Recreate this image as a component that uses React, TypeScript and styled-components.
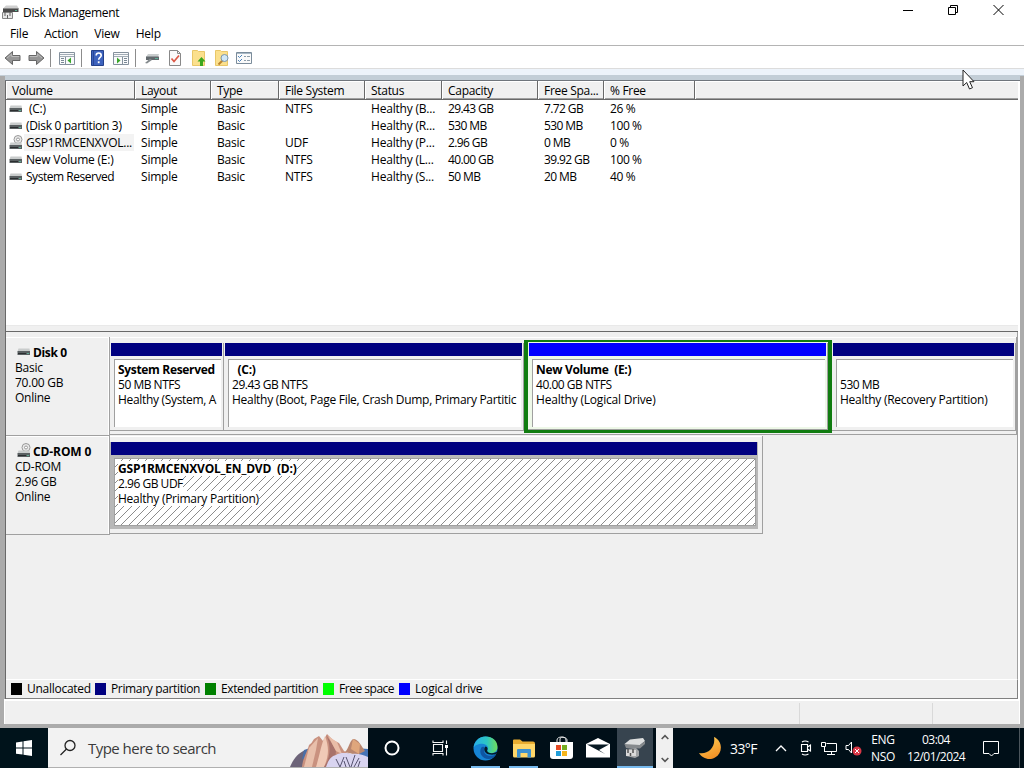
import styled, { createGlobalStyle, css } from "styled-components";

const GlobalStyle = createGlobalStyle`
  * {
    box-sizing: border-box;
  }

  body {
    margin: 0;
    width: 1024px;
    height: 768px;
    overflow: hidden;
    background: #f0f0f0;
    color: #000;
    font-family: "Open Sans", "Noto Sans", sans-serif;
    font-size: 12px;
    letter-spacing: -0.2px;
    white-space: pre;
  }

  svg {
    display: block;
    flex: none;
  }
`;

const Screen = styled.div`
  position: relative;
  display: flex;
  flex-direction: column;
  width: 1024px;
  height: 768px;
  overflow: hidden;
`;

const TitleBar = styled.header`
  display: flex;
  align-items: center;
  height: 24px;
  padding-left: 2px;
  background: #fff;
`;

const Title = styled.h1`
  flex: 1;
  margin: 0 0 0 4px;
  font-size: 12px;
  font-weight: 400;
  letter-spacing: -0.33px;
`;

const WindowButtons = styled.div`
  display: flex;
  align-items: center;
  gap: 34px;
  padding: 0 20px 4px 0;
`;

const MenuBar = styled.nav`
  display: flex;
  align-items: center;
  gap: 16px;
  height: 22px;
  padding: 0 10px 2px;
  background: #fff;
  border-bottom: 1px solid #b4b4b4;
  letter-spacing: -0.2px;
`;

const MenuItem = styled.span``;

const Toolbar = styled.div`
  display: flex;
  align-items: center;
  height: 23px;
  padding: 2px 0 0 4px;
  background: #fff;
  border-bottom: 1px solid #dcdcdc;
`;

const ToolIcon = styled.span<{ $ml?: number }>`
  display: flex;
  margin-left: ${({ $ml = 0 }) => $ml}px;
`;

const ToolSeparator = styled.span<{ $ml: number }>`
  width: 1px;
  height: 18px;
  margin-left: ${({ $ml }) => $ml}px;
  background: #8c8c8c;
`;

const Ribbon = styled.div`
  height: 12px;
  background:
    linear-gradient(#ababab, #ababab) left bottom / 5px 5px no-repeat,
    linear-gradient(#ababab, #ababab) right bottom / 4px 5px no-repeat,
    linear-gradient(#edf3fa 0 6px, #c3ced7 6px 11px, #6f757c 11px);
`;

const Frame = styled.main`
  display: flex;
  flex-direction: column;
  height: 618px;
  border: solid #ababab;
  border-width: 0 4px 0 5px;
`;

const Body = styled.div`
  display: flex;
  flex-direction: column;
  height: 618px;
  border-left: 1px solid #696969;
  border-right: 2px solid #fff;
`;

const VolumeList = styled.section`
  height: 244px;
  background: #fff;
`;

const columns = "129px 76px 68px 86px 77px 96px 66px 91px 1fr";

const HeaderRow = styled.div`
  display: grid;
  grid-template-columns: ${columns};
  height: 19px;
  background: #f0f0f0;
  border-bottom: 1px solid #696969;
  box-shadow: inset 0 -1px #a0a0a0, inset 0 1px #fff;
`;

const HeaderCell = styled.span<{ $last?: boolean }>`
  padding: 1px 0 0 ${({ $last }) => ($last ? 0 : 5)}px;
  border-left: 1px solid #fff;
  border-right: ${({ $last }) => ($last ? "none" : "1px solid #696969")};
  line-height: 18px;
  overflow: hidden;
  letter-spacing: -0.3px;
`;

const Row = styled.div`
  display: grid;
  grid-template-columns: ${columns};
  height: 17px;
  line-height: 17px;
`;

const Cell = styled.span<{ $ls?: number }>`
  padding-left: 6px;
  overflow: hidden;
  letter-spacing: ${({ $ls = -0.2 }) => $ls}px;
`;

const VolumeCell = styled.span`
  display: flex;
  align-items: center;
  padding-left: 3px;
`;

const VolumeName = styled.span<{ $focused?: boolean; $ls: number }>`
  margin-left: 1px;
  padding: 0 2px;
  letter-spacing: ${({ $ls }) => $ls}px;
  background: ${({ $focused }) => ($focused ? "#f3f3f3" : "none")};
`;

const Splitter = styled.div`
  height: 7px;
  background: linear-gradient(#e9e9e9 0 1px, #f0f0f0 1px 6px, #696969 6px);
`;

const DiskPane = styled.section`
  height: 347px;
  padding-top: 5px;
  background: #f0f0f0;
  border-right: 1px solid #a0a0a0;
`;

const DiskRow = styled.div`
  display: flex;
  height: 99px;
`;

const DiskInfo = styled.div`
  width: 104px;
  height: 99px;
  padding: 8px 0 0 9px;
  border: solid #a0a0a0;
  border-width: 0 1px 1px 0;
  box-shadow: inset 0 1px #fff, inset -1px 0 #fff;
  line-height: 15px;
  letter-spacing: -0.25px;
`;

const DiskName = styled.div`
  display: flex;
  align-items: flex-end;
  gap: 2px;
  height: 15px;
  padding-left: 2px;
  font-weight: 700;
`;

const DiskTitle = styled.span<{ $ls: number }>`
  letter-spacing: ${({ $ls }) => $ls}px;
`;

const Partitions = styled.div<{ $width: number }>`
  display: flex;
  width: ${({ $width }) => $width}px;
  height: 98px;
  padding-top: 6px;
  border: solid #a0a0a0;
  border-width: 0 1px 1px 0;
  box-shadow: inset 0 1px #fff;
`;

const Partition = styled.article<{ $width: number; $selected?: boolean }>`
  display: flex;
  flex: none;
  flex-direction: column;
  width: ${({ $width }) => $width}px;
  height: 88px;
  max-height: 100%;
  padding-left: 1px;
  border: solid #a0a0a0;
  border-width: 0 1px 1px 0;

  ${({ $selected }) =>
    $selected &&
    css`
      height: 87px;
      border: none;
      background: #b8b8b8;
    `}
`;

const Extended = styled.div`
  display: flex;
  flex: none;
  width: 308px;
  height: 93px;
  margin-top: -3px;
  padding-top: 1px;
  border: solid #107c10;
  border-width: 2px 4px 3px;
  background: #eef8e8;
`;

const Bar = styled.div<{ $color: string }>`
  flex: none;
  height: 13px;
  margin-right: 1px;
  background: ${({ $color }) => $color};
`;

const PartitionBody = styled.div<{ $hatched?: boolean }>`
  height: 68px;
  margin: 3px 2px 0 3px;
  padding: 2px 0 0 3px;
  border: solid #a0a0a0;
  border-width: 1px 0 0 1px;
  background: #fff;
  line-height: 15px;
  overflow: hidden;

  ${({ $hatched }) =>
    $hatched &&
    css`
      border-width: 1px;
      background: linear-gradient(135deg, #fff 45%, #8c8c8c 46% 54%, #fff 55%) 0 0 / 8px 8px;
    `}
`;

const Line = styled.div<{ $bold?: boolean; $ls?: number; $filled?: boolean }>`
  width: ${({ $filled }) => ($filled ? "fit-content" : "auto")};
  min-height: 15px;
  font-weight: ${({ $bold }) => ($bold ? 700 : 400)};
  letter-spacing: ${({ $ls = -0.2 }) => $ls}px;
  background: ${({ $filled }) => ($filled ? "#fff" : "none")};
`;

const Legend = styled.footer`
  display: flex;
  align-items: center;
  height: 20px;
  padding: 0 0 1px 5px;
  background: #f0f0f0;
  border-top: 1px solid #fff;
  border-bottom: 1px solid #808080;
  border-right: 1px solid #808080;
`;

const LegendItem = styled.span<{ $width: number; $ls: number }>`
  display: flex;
  align-items: center;
  gap: 5px;
  width: ${({ $width }) => $width}px;
  letter-spacing: ${({ $ls }) => $ls}px;
`;

const Swatch = styled.i<{ $color: string }>`
  flex: none;
  width: 11px;
  height: 12px;
  background: ${({ $color }) => $color};
`;

const StatusBar = styled.div`
  display: grid;
  grid-template-columns: 796px 133px 1fr;
  height: 25px;
  padding-top: 4px;
  border: solid #ababab;
  border-width: 0 4px;
  background: #f0f0f0;
  box-shadow: inset 0 2px #fff, inset 1px 0 #fff, inset -1px 0 #fff;
`;

const StatusCell = styled.span`
  border-right: 1px solid #d9d9d9;
`;

const BottomEdge = styled.div`
  height: 4px;
  background: #ababab;
`;

const Taskbar = styled.div`
  display: flex;
  height: 40px;
  background: #000f18;
  color: #fff;
`;

const StartButton = styled.button`
  display: grid;
  place-items: center;
  width: 48px;
  padding: 0;
  border: none;
  background: #00131b;
`;

const Search = styled.div`
  display: flex;
  align-items: center;
  width: 320px;
  padding-left: 11px;
  background: #f2f2f2;
  border-bottom: 1px solid #b0b0b0;
  color: #3b3b3b;
`;

const SearchText = styled.span`
  width: 141px;
  margin-left: 11px;
  margin-right: 63px;
  padding-top: 1px;
  font-size: 15px;
  letter-spacing: -0.53px;
`;

const TaskButton = styled.span<{ $width: number; $running?: boolean; $active?: boolean }>`
  display: grid;
  place-items: center;
  width: ${({ $width }) => $width}px;
  background: ${({ $active }) => ($active ? "#37444f" : "none")};
  box-shadow: ${({ $running }) => ($running ? "inset 0 -2px #76b9ed" : "none")};
`;

const PinnedApps = styled.div`
  display: flex;
  gap: 9px;
  margin: 0 5px 0 7px;
`;

const TaskScroll = styled.span`
  display: flex;
  flex-direction: column;
  align-items: center;
  justify-content: space-between;
  width: 17px;
  margin-left: 3px;
  padding: 6px 0 5px;
  background: #f0f0f0;
`;

const Tray = styled.div`
  display: flex;
  align-items: center;
  flex: 1;
  padding-left: 26px;
`;

const Temperature = styled.span`
  width: 45px;
  margin-left: 8px;
  font-size: 14px;
  letter-spacing: -0.6px;
`;

const TrayIcon = styled.span<{ $width: number }>`
  width: ${({ $width }) => $width}px;
`;

const TrayText = styled.span<{ $width: number; $ls: number }>`
  width: ${({ $width }) => $width}px;
  padding-bottom: 1px;
  line-height: 17px;
  text-align: center;
  letter-spacing: ${({ $ls }) => $ls}px;
`;

const Notifications = styled.span`
  margin-left: 9px;
`;

const ShowDesktop = styled.span`
  align-self: stretch;
  width: 5px;
  margin-left: auto;
  border-left: 1px solid #4b555c;
`;

const Cursor = styled.svg`
  position: absolute;
  left: 962px;
  top: 69px;
`;

const DriveIcon = ({ disc }: { disc?: boolean }) => (
  <svg width="14" height="16" viewBox="0 0 14 16">
    {disc && (
      <>
        <circle cx="9" cy="4.5" r="4" fill="#e9e9e9" stroke="#999" />
        <circle cx="9" cy="4.5" r="1.5" fill="#fff" stroke="#999" />
      </>
    )}
    <g transform={disc ? "translate(0 3)" : undefined}>
      <path d="M1.5 4.5h11l.5 3H.5z" fill="#c9cccc" />
      <path d="M.5 7h12.500v4H.5z" fill="#5a6062" />
      <path d="M1 9.500h8" stroke="#2b2e30" />
      <path d="M10 9.500h2" stroke="#5eae94" />
    </g>
  </svg>
);

const AppIcon = () => (
  <svg width="17" height="16" viewBox="0 0 17 16">
    <path d="M4 1.500h11l1.500 2.500H1.500z" fill="#cfcfcf" />
    <path d="M1 4h15.500v4H1z" fill="#4a4a4a" />
    <path d="M1 4.500h15" stroke="#8a8a8a" />
    <path d="M13 6.500h2" stroke="#5bb394" />
    <path d="M.5 8.500h10v6H.5z" fill="#e6e6e6" stroke="#858585" />
    <path d="M3 8v4M8 8v4M5.500 11v3.500" stroke="#606060" />
  </svg>
);

const Arrow = ({ flip }: { flip?: boolean }) => (
  <svg width="18" height="16" viewBox="0 0 18 16">
    <g transform={flip ? "translate(18 0) scale(-1 1)" : undefined}>
      <path d="M1 8 8.500 1.500v4H16v5H8.500v4z" fill="#969696" stroke="#666" />
      <path d="m3 8 4.700-4v2.500h7.500" fill="none" stroke="#bcbcbc" />
    </g>
  </svg>
);

const PaneIcon = ({ flip }: { flip?: boolean }) => (
  <svg width="16" height="16" viewBox="0 0 16 16">
    <path d="M.5 2.500h15v12H.5z" fill="#f9fafb" stroke="#85919d" />
    <path d="M1 4.500h14M1 6.500h14" stroke="#a3adb6" />
    <path d={flip ? "M9.500 7v7" : "M6.500 7v7"} stroke="#85919d" />
    <path d={flip ? "M11 8.500h3M11 10.500h3M11 12.500h3" : "M2 8.500h3M2 10.500h3M2 12.500h3"} stroke="#7a8894" />
    <path d={flip ? "M4 7.500v6l3.500-3z" : "M12 7.500v6l-3.500-3z"} fill="#39a629" />
  </svg>
);

const HelpIcon = () => (
  <svg width="14" height="17" viewBox="0 0 14 17">
    <path d="M.5.5h12v15H.5z" fill="#3d62bd" stroke="#24418b" />
    <path d="M2.500 1v14" stroke="#2a4796" />
    <path d="M5.200 5.500c0-3.300 5-3.300 5 0 0 2-2.500 2-2.500 4.300" fill="none" stroke="#fff" strokeWidth="1.6" />
    <path d="M6.800 11.300h1.800v1.900H6.800z" fill="#fff" />
  </svg>
);

const ConnectIcon = () => (
  <svg width="16" height="16" viewBox="0 0 16 16">
    <path d="M4 4h11l-1 3H2z" fill="#c8cccd" />
    <path d="M2 6.500h13v3.500H2z" fill="#62696d" />
    <path d="M11 8.500h3" stroke="#5dae95" />
    <path d="m1 13 5-4.500L8 10l-5 3.500z" fill="#858b8e" />
  </svg>
);

const CheckPage = () => (
  <svg width="14" height="17" viewBox="0 0 14 17">
    <path d="M1.500.5h8l3 3v12h-11z" fill="#fafafa" stroke="#888" />
    <path d="M9.500.5v3h3" fill="none" stroke="#888" />
    <path d="m3.500 8.500 2.500 3 5-6" fill="none" stroke="#dc5846" strokeWidth="1.7" />
  </svg>
);

const FolderUp = () => (
  <svg width="15" height="17" viewBox="0 0 15 17">
    <path d="M.5.5h5l1 1h6v14H.5z" fill="#fbe08d" stroke="#e9c768" />
    <path d="m9.500 7 4 4.500h-2.500V16H8v-4.500H5.500z" fill="#3ba71e" />
  </svg>
);

const FolderSearch = () => (
  <svg width="15" height="17" viewBox="0 0 15 17">
    <path d="M.5.5h5l1 1h6v14H.5z" fill="#fbe08d" stroke="#e9c768" />
    <path d="m3.500 14.500 4-4" stroke="#bb842f" strokeWidth="2" />
    <circle cx="9.500" cy="8" r="3.500" fill="#cfe7f7" stroke="#7b96aa" />
  </svg>
);

const ListIcon = () => (
  <svg width="16" height="14" viewBox="0 0 16 14">
    <path d="M.5 1.500h15v11H.5z" fill="#fafafa" stroke="#7b8c9b" />
    <path d="M1 2.500h14" stroke="#a9b9c6" />
    <path d="m2 5 1.500 1.500L6 4M2 9l1.500 1.500L6 8" fill="none" stroke="#4b82ba" />
    <path d="M8 5.500h2m1 0h3M8 9.500h2m1 0h3" stroke="#8f9eaa" />
  </svg>
);

const Chevron = ({ down, color = "#555", size = 8 }: { down?: boolean; color?: string; size?: number }) => (
  <svg width={size} height={size / 2 + 2} viewBox="0 0 12 8">
    <path
      d={down ? "m1 1 5 5 5-5" : "m1 7 5-5 5 5"}
      fill="none"
      stroke={color}
      strokeWidth={size > 10 ? 1.3 : 2.4}
    />
  </svg>
);

const SearchIcon = () => (
  <svg width="18" height="18" viewBox="0 0 18 18" fill="none" stroke="#222" strokeWidth="1.3">
    <circle cx="11" cy="6.500" r="5" />
    <path d="m7.500 10-6 6" />
  </svg>
);

const Mountains = () => (
  <svg width="78" height="39" viewBox="0 0 78 39">
    <path d="M0 39c3-7 7-14 16-17h6l4 17z" fill="#6d6479" />
    <path d="m14 22 9-3 2 10-13 2z" fill="#4a6fa8" />
    <path d="m66 20 12 1v10H62z" fill="#4673b5" />
    <path d="M12 39c1-10 5-14 7-22q3-2 5-6l5-3 4 5 4-7 6 6 6 3 5 8 8 4v12z" fill="#c9917f" />
    <path d="m28 10-9 10-5 19h8l4-17z" fill="#e8bfab" />
    <path d="M35 8c-4 9-5 18-9 31h8c4-9 6-18 1-31z" fill="#f0cab7" />
    <path d="M36 7c5 9 5 22-2 32h10l2-16-5-9z" fill="#a8726b" />
    <path d="m38 8 8 15 6 3-5-12z" fill="#e9bda8" />
    <path d="M55 24c4-4 4-10 8-13 6 0 8 7 12 12l-8 4z" fill="#b9866f" />
    <path d="m63 11-2 10 8 5 1-10z" fill="#dfa67c" />
    <path d="M36 39c2-6 5-11 10-12 4-3 12-2 16-1 6-1 11 1 16 3v10z" fill="#d9d4f0" />
    <path d="m50 39-4-8m4 8 4-10m2 10-2-6m6 6-4-10m5 10 4-12m-1 12 5-9m-1 9 2-6" fill="none" stroke="#55526e" />
  </svg>
);

const TaskViewIcon = () => (
  <svg width="17" height="16" viewBox="0 0 17 16" fill="none" stroke="#f4f4f4" strokeWidth="1.1">
    <path d="M1.500 4.500h9v7h-9zM1 .5v2h10v-2M1 15.500v-2h10v2M14.500.5v3.500m0 4v7.500" />
    <path d="M13 5h3v3h-3z" fill="#fff" stroke="none" />
  </svg>
);

const EdgeIcon = () => (
  <svg width="25" height="25" viewBox="0 0 24 24">
    <defs>
      <linearGradient id="edgeTop">
        <stop stopColor="#28aee8" />
        <stop offset=".55" stopColor="#2cc6c4" />
        <stop offset="1" stopColor="#70dd5a" />
      </linearGradient>
    </defs>
    <circle cx="12" cy="12" r="11.500" fill="#1684d4" />
    <path d="M.5 12C1 5 6 .5 12 .5c7 0 11.500 4.500 11.500 10 0 4-3 6-6.500 6-3 0-4-1.200-3.500-2.200 2.500-3-.5-6.800-4.500-6.800C5 7.500 1 9 .5 12z" fill="url(#edgeTop)" />
    <path d="M8 11c-3 5 1 11 7 11 3 0 5-1 7-4-8 3-13-1-11-6.500C10.500 10 9 10 8 11z" fill="#0e55a2" />
    <path d="M13.500 14c1-2 .5-3.500-1.500-4-2 1.500-1.500 6.500 3 7.500 3 .7 6 .4 7.500-.5l1.500-3c-1.500 2-3.500 2.500-6 2.500s-4-.7-4.500-2.500z" fill="#041a29" />
  </svg>
);

const ExplorerIcon = () => (
  <svg width="22" height="19" viewBox="0 0 22 19">
    <path d="M0 1.500Q0 .5 1 .5h6l2.500 2H20q2 0 2 2V17H0z" fill="#e9ad31" />
    <path d="M0 5h22v12q0 1.500-1.500 1.500h-19Q0 18.500 0 17z" fill="#ffd769" />
    <path d="M4 18.500V11q0-1 1-1h12q1 0 1 1v7.500h-3.500V14h-7v4.500z" fill="#3d91cf" />
  </svg>
);

const StoreIcon = () => (
  <svg width="23" height="24" viewBox="0 0 23 24">
    <path d="M7 7V4c0-4 9-4 9 0v3M10 6V3c0-3 7-2 7 1v2" fill="none" stroke="#e8e8e8" />
    <path d="M0 6h23v14q0 3-3 3H3q-3 0-3-3z" fill="#fff" />
    <path d="M6 9h5v5H6z" fill="#e64b25" />
    <path d="M12 9h5v5h-5z" fill="#76ad21" />
    <path d="M6 15h5v5H6z" fill="#229ed9" />
    <path d="M12 15h5v5h-5z" fill="#f5b51b" />
  </svg>
);

const MailIcon = () => (
  <svg width="24" height="20" viewBox="0 0 24 20">
    <path d="M0 6 12 0l12 6v13.500H0z" fill="#fff" />
    <path d="M1 6.500h22l-10 5.500 6 4z" fill="#071923" />
  </svg>
);

const ManagementIcon = () => (
  <svg width="24" height="22" viewBox="0 0 24 22">
    <path d="M7 2.500 20 1l2 3-5 4H3L1.500 7z" fill="#dcdede" />
    <path d="m1.500 7 15.500 1 5-4v3l-5 4.500L3 11z" fill="#85898c" />
    <path d="m3 12 10-1 3 3v5l-4 2-9-2z" fill="#a2a5a7" />
    <path d="M3 13h10v6H3z" fill="#dadada" />
    <path d="M5 12v4m5-4v4M7.500 16v3" stroke="#555" strokeWidth="1.5" />
  </svg>
);

const MoonIcon = () => (
  <svg width="23" height="23" viewBox="0 0 23 23">
    <defs>
      <linearGradient id="moon" x2=".5" y2="1">
        <stop stopColor="#ffd45a" />
        <stop offset="1" stopColor="#f39327" />
      </linearGradient>
    </defs>
    <path d="M15 0c9 4 9 16 1 20.500C10 24 3 21 0 16c8 2 17-5 15-16z" fill="url(#moon)" />
  </svg>
);

const MeetIcon = () => (
  <svg width="12" height="16" viewBox="0 0 12 16" fill="none" stroke="#fff" strokeWidth="1.1">
    <path d="M1.500 4.500h6v7h-6zM7.500 7 10.500 5v6l-3-2M2 2q3-2 6.500 0M2 14q3 2 6.500 0" />
  </svg>
);

const NetworkIcon = () => (
  <svg width="17" height="15" viewBox="0 0 17 15" fill="none" stroke="#fff">
    <path d="M5.500 2.500h10v8h-12v-4M10.500 11v3M6 13.500h8M.5 1.500h4v4h-4zM3.500 6v5" />
  </svg>
);

const VolumeIcon = () => (
  <svg width="17" height="16" viewBox="0 0 17 16">
    <path d="M1 5.500h2.500L6.500 2v11L3.500 9.500H1z" fill="none" stroke="#fff" />
    <circle cx="12" cy="11" r="4.500" fill="#d93746" />
    <path d="m10 9 4 4m0-4-4 4" stroke="#fff" />
  </svg>
);

type Volume = {
  name: string;
  ls: number;
  fs: string;
  status: string;
  capacity: string;
  free: string;
  percent: string;
  disc?: boolean;
};

const volumes: Volume[] = [
  { name: " (C:)", ls: -0.2, fs: "NTFS", status: "Healthy (B...", capacity: "29.43 GB", free: "7.72 GB", percent: "26 %" },
  { name: "(Disk 0 partition 3)", ls: -0.32, fs: "", status: "Healthy (R...", capacity: "530 MB", free: "530 MB", percent: "100 %" },
  { name: "GSP1RMCENXVOL...", ls: -0.25, fs: "UDF", status: "Healthy (P...", capacity: "2.96 GB", free: "0 MB", percent: "0 %", disc: true },
  { name: "New Volume (E:)", ls: -0.22, fs: "NTFS", status: "Healthy (L...", capacity: "40.00 GB", free: "39.92 GB", percent: "100 %" },
  { name: "System Reserved", ls: -0.46, fs: "NTFS", status: "Healthy (S...", capacity: "50 MB", free: "20 MB", percent: "40 %" },
];

const headers = ["Volume", "Layout", "Type", "File System", "Status", "Capacity", "Free Spa...", "% Free"];

const legend = [
  { label: "Unallocated", color: "#000", width: 84, ls: -0.27 },
  { label: "Primary partition", color: "#000080", width: 110, ls: -0.35 },
  { label: "Extended partition", color: "#008000", width: 118, ls: -0.38 },
  { label: "Free space", color: "#00ff00", width: 76, ls: -0.48 },
  { label: "Logical drive", color: "#0000ff", width: 110, ls: -0.17 },
];

type PartitionPanelProps = {
  width: number;
  color?: string;
  name: string;
  nameLs?: number;
  size: string;
  status: string;
  statusLs?: number;
  selected?: boolean;
};

const PartitionPanel = ({
  width,
  color = "#000080",
  name,
  nameLs = -0.33,
  size,
  status,
  statusLs = -0.27,
  selected,
}: PartitionPanelProps) => (
  <Partition $width={width} $selected={selected}>
    <Bar $color={color} />
    <PartitionBody $hatched={selected}>
      <Line $bold $ls={nameLs} $filled={selected}>{name}</Line>
      <Line $ls={-0.48} $filled={selected}>{size}</Line>
      <Line $ls={statusLs} $filled={selected}>{status}</Line>
    </PartitionBody>
  </Partition>
);

export default function App() {
  return (
    <Screen>
      <GlobalStyle />
      <TitleBar>
        <AppIcon />
        <Title>Disk Management</Title>
        <WindowButtons>
          <svg width="11" height="12"><path d="M0 6.500h10" stroke="#000" /></svg>
          <svg width="11" height="12" fill="none" stroke="#000"><path d="M.5 3.500h7v7h-7zM2.500 3V1.500h7v7H8" /></svg>
          <svg width="11" height="12"><path d="m.5 1 10 10m0-10-10 10" stroke="#000" /></svg>
        </WindowButtons>
      </TitleBar>
      <MenuBar>
        <MenuItem>File</MenuItem>
        <MenuItem>Action</MenuItem>
        <MenuItem>View</MenuItem>
        <MenuItem>Help</MenuItem>
      </MenuBar>
      <Toolbar>
        <ToolIcon><Arrow /></ToolIcon>
        <ToolIcon $ml={5}><Arrow flip /></ToolIcon>
        <ToolSeparator $ml={5} />
        <ToolIcon $ml={8}><PaneIcon /></ToolIcon>
        <ToolSeparator $ml={6} />
        <ToolIcon $ml={9}><HelpIcon /></ToolIcon>
        <ToolIcon $ml={8}><PaneIcon flip /></ToolIcon>
        <ToolSeparator $ml={6} />
        <ToolIcon $ml={8}><ConnectIcon /></ToolIcon>
        <ToolIcon $ml={8}><CheckPage /></ToolIcon>
        <ToolIcon $ml={10}><FolderUp /></ToolIcon>
        <ToolIcon $ml={8}><FolderSearch /></ToolIcon>
        <ToolIcon $ml={6}><ListIcon /></ToolIcon>
      </Toolbar>
      <Ribbon />
      <Frame>
        <Body>
          <VolumeList>
            <HeaderRow>
              {headers.map((h) => (
                <HeaderCell key={h}>{h}</HeaderCell>
              ))}
              <HeaderCell $last />
            </HeaderRow>
            {volumes.map((v) => (
              <Row key={v.name}>
                <VolumeCell>
                  <DriveIcon disc={v.disc} />
                  <VolumeName $ls={v.ls} $focused={v.disc}>{v.name}</VolumeName>
                </VolumeCell>
                <Cell>Simple</Cell>
                <Cell>Basic</Cell>
                <Cell>{v.fs}</Cell>
                <Cell>{v.status}</Cell>
                <Cell $ls={-0.6}>{v.capacity}</Cell>
                <Cell $ls={-0.6}>{v.free}</Cell>
                <Cell $ls={-0.4}>{v.percent}</Cell>
              </Row>
            ))}
          </VolumeList>
          <Splitter />
          <DiskPane>
            <DiskRow>
              <DiskInfo>
                <DiskName><DriveIcon /><DiskTitle $ls={-0.35}>Disk 0</DiskTitle></DiskName>
                <div>Basic</div>
                <div>70.00 GB</div>
                <div>Online</div>
              </DiskInfo>
              <Partitions $width={907}>
                <PartitionPanel width={114} name="System Reserved" size="50 MB NTFS" status="Healthy (System, A" statusLs={-0.32} />
                <PartitionPanel width={300} name="  (C:)" size="29.43 GB NTFS" status="Healthy (Boot, Page File, Crash Dump, Primary Partitic" statusLs={-0.29} />
                <Extended>
                  <PartitionPanel width={300} color="#0000ff" name="New Volume  (E:)" size="40.00 GB NTFS" status="Healthy (Logical Drive)" statusLs={-0.2} />
                </Extended>
                <PartitionPanel width={184} name="" size="530 MB" status="Healthy (Recovery Partition)" />
              </Partitions>
            </DiskRow>
            <DiskRow>
              <DiskInfo>
                <DiskName><DriveIcon disc /><DiskTitle $ls={-0.1}>CD-ROM 0</DiskTitle></DiskName>
                <div>CD-ROM</div>
                <div>2.96 GB</div>
                <div>Online</div>
              </DiskInfo>
              <Partitions $width={653}>
                <PartitionPanel selected width={648} name="GSP1RMCENXVOL_EN_DVD  (D:)" nameLs={-0.2} size="2.96 GB UDF" status="Healthy (Primary Partition)" />
              </Partitions>
            </DiskRow>
          </DiskPane>
          <Legend>
            {legend.map((l) => (
              <LegendItem key={l.label} $width={l.width} $ls={l.ls}>
                <Swatch $color={l.color} />
                {l.label}
              </LegendItem>
            ))}
          </Legend>
        </Body>
      </Frame>
      <StatusBar>
        <StatusCell />
        <StatusCell />
      </StatusBar>
      <BottomEdge />
      <Taskbar>
        <StartButton>
          <svg width="16" height="16" fill="#fff"><path d="M0 2.500 6.500 1.500v6H0zM7.500 1.300 16 0v7.500H7.500zM0 8.500h6.500v6L0 13.700zM7.500 8.500H16V16l-8.500-1.300z" /></svg>
        </StartButton>
        <Search>
          <SearchIcon />
          <SearchText>Type here to search</SearchText>
          <Mountains />
        </Search>
        <TaskButton $width={48}>
          <svg width="16" height="16"><circle cx="8" cy="8" r="6.500" fill="none" stroke="#fff" strokeWidth="2" /></svg>
        </TaskButton>
        <TaskButton $width={48}><TaskViewIcon /></TaskButton>
        <PinnedApps>
          <TaskButton $width={29} $running><EdgeIcon /></TaskButton>
          <TaskButton $width={29} $running><ExplorerIcon /></TaskButton>
          <TaskButton $width={28}><StoreIcon /></TaskButton>
          <TaskButton $width={28}><MailIcon /></TaskButton>
        </PinnedApps>
        <TaskButton $width={36} $running $active><ManagementIcon /></TaskButton>
        <TaskScroll>
          <Chevron />
          <Chevron down />
        </TaskScroll>
        <Tray>
          <MoonIcon />
          <Temperature>33°F</Temperature>
          <TrayIcon $width={25}><Chevron color="#fff" size={12} /></TrayIcon>
          <TrayIcon $width={21}><MeetIcon /></TrayIcon>
          <TrayIcon $width={24}><NetworkIcon /></TrayIcon>
          <TrayIcon $width={22}><VolumeIcon /></TrayIcon>
          <TrayText $width={32} $ls={-0.35}>{"ENG\nNSO"}</TrayText>
          <TrayText $width={74} $ls={-0.55}>{"03:04\n12/01/2024"}</TrayText>
          <Notifications>
            <svg width="18" height="18" fill="none" stroke="#fff"><path d="M1.500 2.500h15v12H12l-2.500 2.500L7 14.500H1.500z" /></svg>
          </Notifications>
          <ShowDesktop />
        </Tray>
      </Taskbar>
      <Cursor width="13" height="21" viewBox="0 0 13 21">
        <path d="M1 1v16l3.700-3.500L7.500 20l3-1.300-2.800-6H12z" fill="#fff" stroke="#222" />
      </Cursor>
    </Screen>
  );
}
